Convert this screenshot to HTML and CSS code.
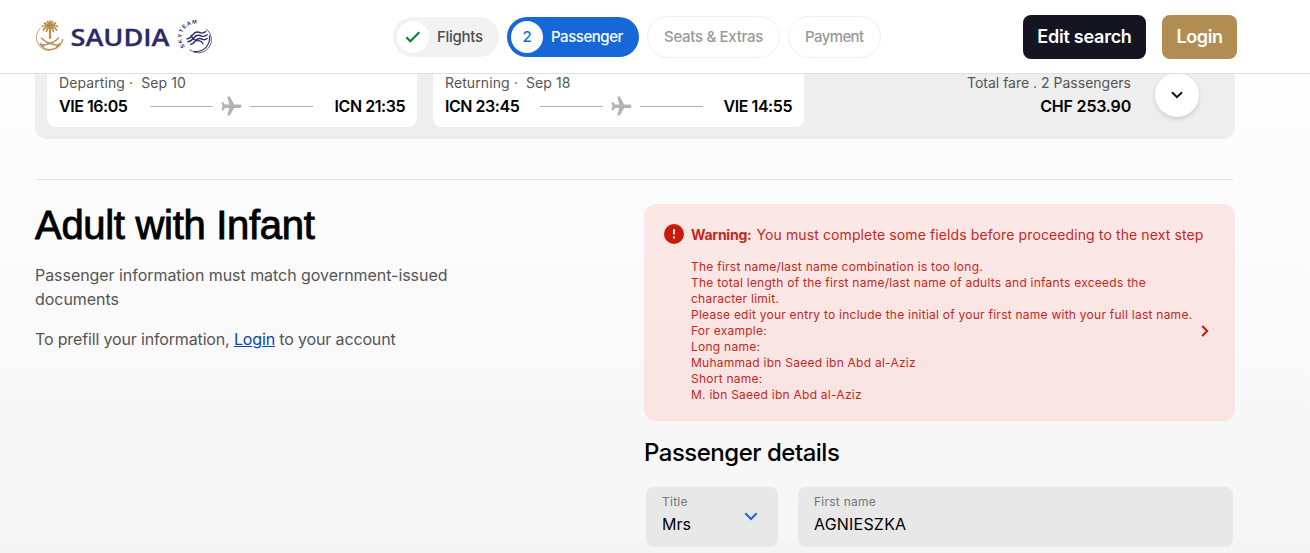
FILE: index.html
```html
<!DOCTYPE html>
<html lang="en">
<head>
  <meta charset="UTF-8">
  <meta name="viewport" content="width=device-width, initial-scale=1">
  <title>Saudia - Passenger details</title>
  <link rel="stylesheet" href="styles.css">
</head>
<body>
  <header class="header">
    <svg class="logo" width="178" height="36" viewBox="0 0 178 36">
      <!-- palm and swords -->
      <g fill="none" stroke="#b98d50" stroke-linecap="round">
        <path d="M4 9.500A13.200 13.200 0 0 0 14 31.700" stroke-width=".8"/>
        <path d="M4 25.500A12.900 12.900 0 0 0 26.700 20.500" stroke-width="1.200"/>
        <path d="M14 8v11" stroke-width="2.200"/>
        <path d="M14 7.500L8.500 4M14 7.500L19.500 4M14 7.500L11.500 2.500M14 7.500L16.500 2.500M14 7.500V2.200M14 7.500Q9 5 6.500 7.500M14 7.500Q19 5 21.500 7.500M14 7.500Q9.500 7 7.500 11M14 7.500Q18.500 7 20.500 11M14 7.500Q11 9 10.500 12.500M14 7.500Q17 9 17.500 12.500" stroke-width="1.700"/>
        <path d="M5.500 19Q10 24.500 22.500 26.500M22.500 19Q18 24.500 5.500 26.500M4.500 24.500l3 2.800M23.500 24.500l-3 2.800" stroke-width="1.300"/>
      </g>
      <text class="logo-text" x="34.500" y="26.500" textLength="99" lengthAdjust="spacingAndGlyphs">SAUDIA</text>
      <!-- skyteam -->
      <g transform="translate(12 1.500) scale(.92)">
        <g fill="none" stroke="#2b2a68" stroke-linecap="round">
          <path d="M172.500 9.500A14.500 14.500 0 0 1 154 32" stroke-width=".8"/>
          <path d="M175.500 17A14.500 14.500 0 0 1 159 33.500" stroke-width="1.300"/>
          <path d="M151 20C157 20 157 12.500 162 12.500S167 16 171.500 12M152 23C158 23 158 16 163 16S168 19.500 173 15.500M155 26C160 25.500 160 19.500 164.500 19.500S168.500 23 173 19.500" stroke-width="1.500"/>
          <path d="M155.500 16Q157.500 21.500 162.500 21.800T168.500 25.500" stroke-width="1.300"/>
        </g>
        <path id="ring" d="M149 28.500A14 14 0 0 1 171.500 8.500" fill="none"/>
        <text class="ring-text"><textPath href="#ring" textLength="36">SKYTEAM</textPath></text>
      </g>
    </svg>

    <nav class="steps">
      <a class="step done">
        <span class="step-badge">
          <svg width="16" height="12" viewBox="0 0 16 12"><path d="M1.300 6.300L5.300 10.300L14.300 1.300" fill="none" stroke="#0b8136" stroke-width="2.200"/></svg>
        </span>
        Flights
      </a>
      <a class="step active"><span class="step-badge">2</span>Passenger</a>
      <a class="step seats">Seats &amp; Extras</a>
      <a class="step payment">Payment</a>
    </nav>

    <div class="actions">
      <button class="btn btn-dark">Edit search</button>
      <button class="btn btn-gold">Login</button>
    </div>
  </header>

  <main class="container">
    <section class="summary">
      <div class="flight">
        <p class="flight-date">Departing ·<span>Sep 10</span></p>
        <div class="flight-route">
          <strong>VIE 16:05</strong>
          <div class="route-line">
            <svg width="21" height="20" viewBox="0 0 21 20"><path d="M20.500 10.200c0-1-.9-1.700-1.900-1.700H13.200L8.800 0.500H6.300L8.300 8.500H4L2.300 6.200H.4L1.500 10.200L.4 14.200h1.900L4 11.900h4.300L6.300 19.500h2.500l4.400-7.600h5.400c1 0 1.900-.7 1.900-1.700z" fill="#b3b3b3"/></svg>
          </div>
          <strong>ICN 21:35</strong>
        </div>
      </div>
      <div class="flight return">
        <p class="flight-date">Returning ·<span>Sep 18</span></p>
        <div class="flight-route">
          <strong>ICN 23:45</strong>
          <div class="route-line">
            <svg width="21" height="20" viewBox="0 0 21 20"><path d="M20.500 10.200c0-1-.9-1.700-1.900-1.700H13.200L8.800 0.500H6.300L8.300 8.500H4L2.300 6.200H.4L1.500 10.200L.4 14.200h1.900L4 11.900h4.300L6.300 19.500h2.500l4.400-7.600h5.400c1 0 1.900-.7 1.900-1.700z" fill="#b3b3b3"/></svg>
          </div>
          <strong>VIE 14:55</strong>
        </div>
      </div>
      <div class="fare">
        <p>Total fare . 2 Passengers</p>
        <strong>CHF 253.90</strong>
      </div>
      <button class="expand">
        <svg width="12" height="8" viewBox="0 0 12 8"><path d="M1 1.200L6 6.200L11 1.200" fill="none" stroke="#111" stroke-width="2"/></svg>
      </button>
    </section>

    <hr class="divider">

    <section class="passenger">
      <div class="intro">
        <h1>Adult with Infant</h1>
        <p class="intro-info">Passenger information must match government-issued documents</p>
        <p class="intro-login">To prefill your information, <a href="#">Login</a> to your account</p>
      </div>

      <div class="details">
        <div class="warning">
          <svg class="warning-icon" width="20" height="20" viewBox="0 0 20 20"><circle cx="10" cy="10" r="10" fill="#cb1a0a"/><path d="M10 5.300v5.200M10 12.500v2" stroke="#fff" stroke-width="1.800"/></svg>
          <div class="warning-body">
            <p class="warning-title"><b>Warning:</b> <span>You must complete some fields before proceeding to the next step</span></p>
            <div class="warning-row">
              <p class="warning-text">
                The first name/last name combination is too long.<br>
                The total length of the first name/last name of adults and infants exceeds the<br>
                character limit.<br>
                Please edit your entry to include the initial of your first name with your full last name.<br>
                For example:<br>
                Long name:<br>
                Muhammad ibn Saeed ibn Abd al-Aziz<br>
                Short name:<br>
                M. ibn Saeed ibn Abd al-Aziz
              </p>
              <svg width="8" height="12" viewBox="0 0 8 12"><path d="M1.200 1L6.200 6L1.200 11" fill="none" stroke="#cb1a0a" stroke-width="2"/></svg>
            </div>
          </div>
        </div>

        <h2>Passenger details</h2>
        <div class="fields">
          <div class="field select">
            <div>
              <label>Title</label>
              <p>Mrs</p>
            </div>
            <svg width="14" height="9" viewBox="0 0 14 9"><path d="M1.300 1.300L7 7L12.700 1.300" fill="none" stroke="#1b66d6" stroke-width="2"/></svg>
          </div>
          <div class="field">
            <div>
              <label>First name</label>
              <p class="value-name">AGNIESZKA</p>
            </div>
          </div>
        </div>
      </div>
    </section>
  </main>
</body>
</html>
```
FILE: styles.css
```css
:root {
  --blue: #1668d9;
  --dark: #151521;
  --gold: #b18d54;
  --red: #c4281c;
  --grey: #555;
}
* { box-sizing: border-box; margin: 0; padding: 0; }
body {
  height: 553px;
  overflow: hidden;
  background: linear-gradient(#fff, #f5f5f5) no-repeat;
  font-family: Inter, "Liberation Sans", sans-serif;
  font-size: 16px;
  color: #000;
}

/* header */
.header {
  position: relative;
  z-index: 1;
  display: flex;
  align-items: center;
  height: 74px;
  padding: 0 73px 0 36px;
  background: #fff;
  border-bottom: 1px solid #e0e0e0;
}
.logo { flex: none; }
.logo-text {
  font: 600 24px "Open Sans", sans-serif;
  fill: #2b2a68;
  stroke: #2b2a68;
  stroke-width: .3px;
}
.ring-text {
  font: 700 6px "Liberation Sans", sans-serif;
  fill: #2b2a68;
}
.steps {
  display: flex;
  align-items: center;
  gap: 8px;
  margin-left: 179px;
}
.step {
  display: flex;
  align-items: center;
  height: 40px;
  border-radius: 21px;
  font-size: 15px;
  font-weight: 500;
  letter-spacing: -.3px;
}
.step-badge {
  display: flex;
  align-items: center;
  justify-content: center;
  width: 32px;
  height: 32px;
  margin: 0 8px 0 4px;
  border-radius: 50%;
  background: #fff;
}
.step.done { width: 106px; background: #f2f2f2; color: #4d4d4d; }
.step.active { width: 132px; background: var(--blue); color: #fff; letter-spacing: -.45px; }
.step.active .step-badge { color: var(--blue); }
.step.seats,
.step.payment {
  width: 133px;
  height: 42px;
  padding-left: 16px;
  border: 1px solid #f0f0f0;
  color: #999;
}
.step.payment { width: 93px; letter-spacing: -.6px; }
.actions {
  display: flex;
  gap: 16px;
  margin-left: auto;
}
.btn {
  height: 44px;
  border: none;
  border-radius: 8px;
  color: #fff;
  font: 600 18px Inter, sans-serif;
  letter-spacing: -.25px;
}
.btn-dark { width: 123px; background: var(--dark); }
.btn-gold { width: 75px; background: var(--gold); letter-spacing: -.4px; }

/* flight summary */
.container { padding: 0 75px 0 35px; }
.summary {
  display: flex;
  height: 105px;
  margin-top: -40px;
  padding: 12px;
  background: #eee;
  border-radius: 12px;
}
.flight {
  width: 370px;
  padding: 28px 12px 0;
  background: #fff;
  border-radius: 8px;
}
.flight.return { width: 371px; margin-left: 16px; }
.flight-date {
  font-size: 14px;
  line-height: 18px;
  letter-spacing: .1px;
  color: var(--grey);
}
.flight-date span { margin-left: 8px; }
.flight-route {
  display: flex;
  align-items: center;
  justify-content: space-between;
  margin-top: 2px;
  line-height: 24px;
}
.flight-route strong, .fare strong {
  font-weight: 600;
  letter-spacing: -.45px;
}
.route-line {
  display: flex;
  align-items: center;
  gap: 8px;
  width: 163px;
}
.route-line::before,
.route-line::after {
  content: "";
  flex: 1;
  height: 1px;
  background: #b3b3b3;
}
.fare {
  margin-left: auto;
  padding-top: 28px;
  text-align: right;
}
.fare p {
  font-size: 14px;
  line-height: 18px;
  color: var(--grey);
}
.fare strong {
  display: block;
  margin-top: 2px;
  line-height: 24px;
  letter-spacing: -.2px;
}
.expand {
  width: 44px;
  height: 44px;
  margin: 27px 24px 0;
  border: none;
  border-radius: 50%;
  background: #fff;
  box-shadow: 0 2px 4px rgba(0, 0, 0, .15);
}
.expand svg { display: block; margin: 0 auto; }
.divider {
  margin: 40px 2px 0;
  border: none;
  border-top: 1px solid #e0e0e0;
}

/* passenger */
.passenger {
  display: flex;
  justify-content: space-between;
  padding-top: 24px;
}
.intro { width: 440px; color: var(--grey); line-height: 24px; }
h1 {
  margin-top: -1px;
  font: 400 40px/44px "Liberation Sans", Arial, sans-serif;
  letter-spacing: -.3px;
  -webkit-text-stroke: .9px #000;
  color: #000;
}
.intro-info { margin-top: 16px; letter-spacing: -.05px; }
.intro-login { margin-top: 16px; letter-spacing: -.15px; }
.intro a { color: #0546b0; }
.details { width: 591px; }
.warning {
  display: flex;
  height: 217px;
  padding: 20px;
  background: rgba(255, 30, 10, .09);
  border-radius: 12px;
  color: var(--red);
}
.warning-icon { flex: none; margin-right: 7px; }
.warning-body { flex: 1; }
.warning-title {
  font-size: 14px;
  line-height: 22px;
  letter-spacing: .11px;
  white-space: nowrap;
}
.warning-title b { margin-right: 1px; letter-spacing: -.25px; }
.warning-row {
  display: flex;
  align-items: center;
  justify-content: space-between;
  margin-top: 13px;
}
.warning-row svg { flex: none; margin-right: 6px; }
.warning-text {
  font-size: 12px;
  line-height: 16px;
  letter-spacing: .25px;
  white-space: nowrap;
}
h2 {
  margin-top: 18px;
  font-size: 24px;
  font-weight: 500;
  line-height: 28px;
  letter-spacing: -.5px;
}
.fields {
  display: flex;
  gap: 20px;
  margin: 20px 2px 0;
}
.field {
  flex: 1;
  display: flex;
  justify-content: space-between;
  height: 60px;
  padding: 7px 16px 0;
  background: #e8e8e8;
  border-radius: 8px;
}
.field.select { flex: none; width: 132px; padding-right: 20px; }
.field svg { margin-top: 18px; }
.field label {
  display: block;
  font-size: 12px;
  line-height: 16px;
  letter-spacing: .25px;
  color: #757575;
}
.field p { margin-top: 2px; line-height: 24px; }
.field .value-name { letter-spacing: .2px; }
```
